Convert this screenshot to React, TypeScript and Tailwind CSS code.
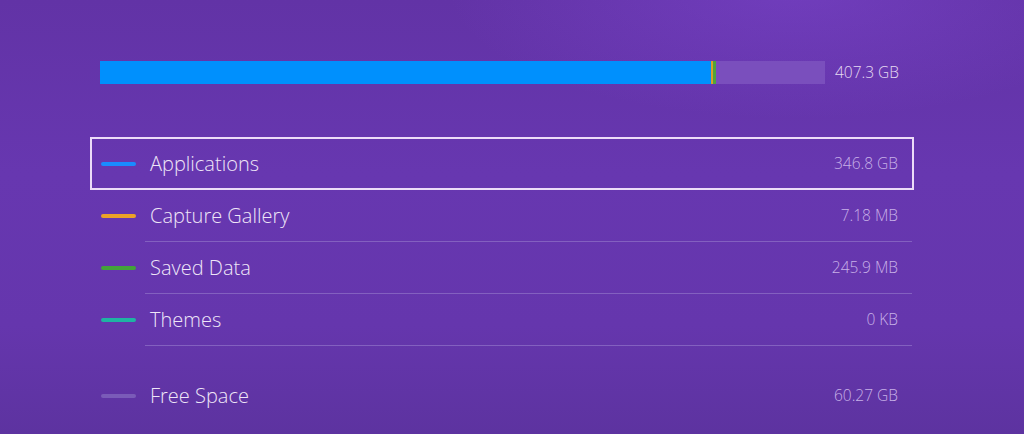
import React from "react";

const rows = [
  { label: "Capture Gallery", value: "7.18 MB", color: "bg-[#eda227]" },
  { label: "Saved Data", value: "245.9 MB", color: "bg-[#43a23a]" },
  { label: "Themes", value: "0 KB", color: "bg-[#1fb3a3]" },
];

export default function App() {
  return (
    <div
      className="relative w-[1024px] h-[434px] overflow-hidden bg-[linear-gradient(180deg,#6233a6_0%,#6737b0_40%,#6536ad_75%,#5d33a0_100%)]"
      style={{ fontFamily: '"Open Sans", "Liberation Sans", sans-serif' }}
    >
      <div className="pointer-events-none absolute -right-[120px] -top-[140px] h-[260px] w-[700px] rounded-[50%] bg-[radial-gradient(ellipse_at_center,rgba(140,80,230,0.35),rgba(140,80,230,0)_70%)]" />
      <div className="relative flex flex-col pl-[90px] pt-[61px]">
        <div className="flex items-center pl-[10px]">
          <div className="flex h-[23px] w-[725px] bg-[#7a4fbd]">
            <div className="h-full w-[611px] bg-[#0090fd]" />
            <div className="h-full w-[2px] bg-[#d9a02a]" />
            <div className="h-full w-[3px] bg-[#4fa63a]" />
          </div>
          <span className="ml-[10px] text-[15.5px] font-light text-[#e6dbf2]">407.3 GB</span>
        </div>

        <div className="mt-[53px] flex w-[824px] flex-col">
          <div className="flex h-[53px] items-center border-[2.5px] border-[#ecdcf8]">
            <div className="ml-[9px] h-[4px] w-[35px] rounded-full bg-[#198bff]" />
            <span className="ml-[14px] text-[20px] font-light text-[#efe6f8]">Applications</span>
            <span className="ml-auto mr-[14px] text-[15.5px] font-light text-[#c8b1e8]">346.8 GB</span>
          </div>
          {rows.map((r) => (
            <div key={r.label} className="flex h-[52px] flex-col">
              <div className="flex flex-1 items-center">
                <div className={`ml-[11px] h-[4px] w-[35px] rounded-full ${r.color}`} />
                <span className="ml-[14px] text-[20px] font-light text-[#efe6f8]">{r.label}</span>
                <span className="ml-auto mr-[16px] text-[15.5px] font-light text-[#c8b1e8]">{r.value}</span>
              </div>
              <div className="ml-[55px] mr-[2px] h-px bg-[#8360c0]" />
            </div>
          ))}
          <div className="mt-[24px] flex h-[51px] items-center">
            <div className="ml-[11px] h-[4px] w-[35px] rounded-full bg-[#7a5bb8]" />
            <span className="ml-[14px] text-[20px] font-light text-[#efe6f8]">Free Space</span>
            <span className="ml-auto mr-[16px] text-[15.5px] font-light text-[#c8b1e8]">60.27 GB</span>
          </div>
        </div>
      </div>
    </div>
  );
}
